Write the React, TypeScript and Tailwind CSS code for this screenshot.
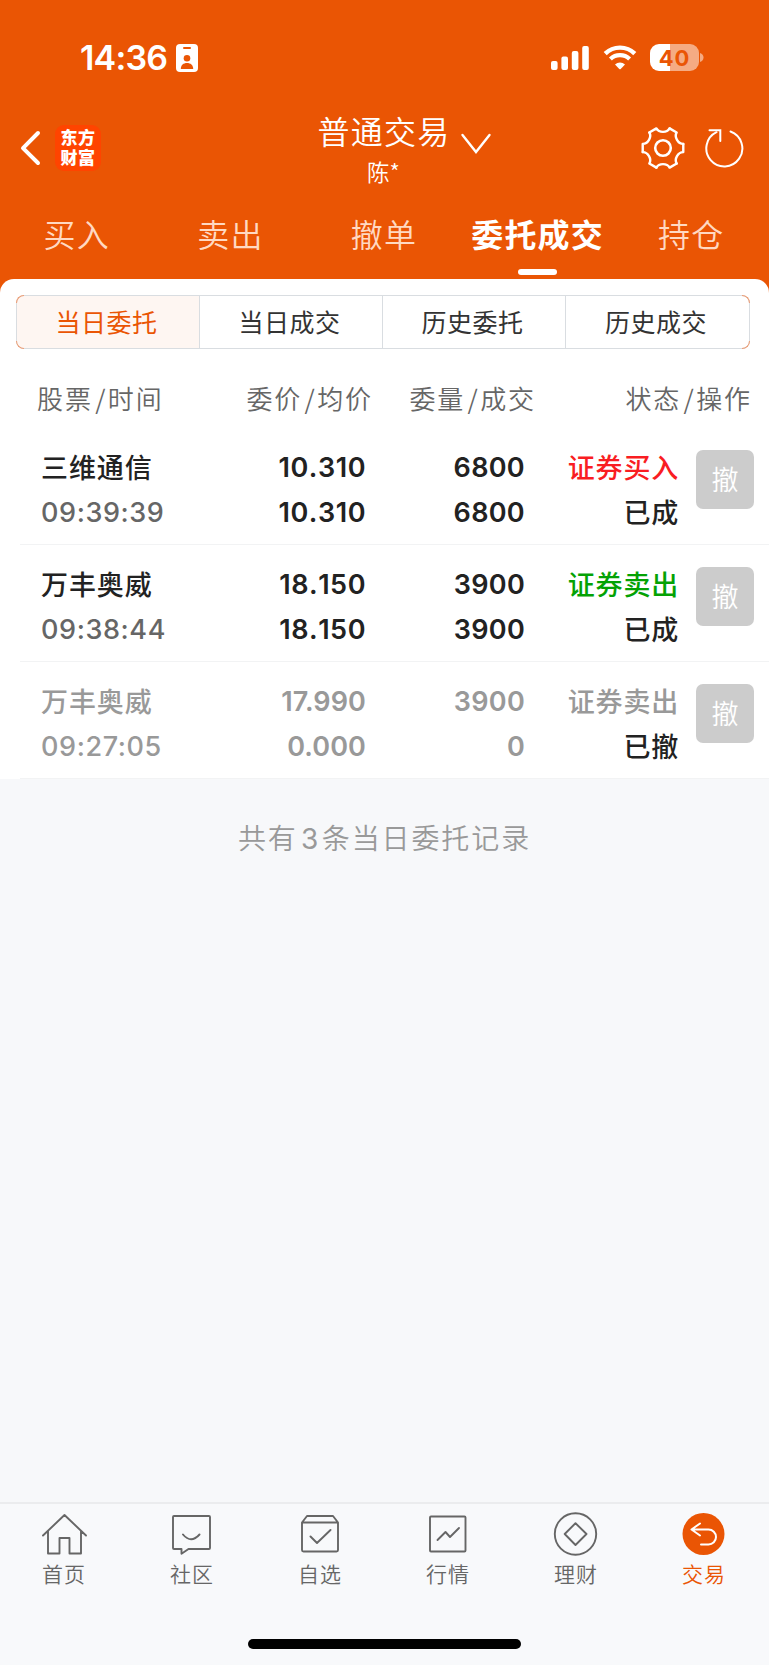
import React from 'react';

type Order = {
  name: string;
  time: string;
  price: string;
  avg: string;
  qty: string;
  filled: string;
  side: string;
  sideColor: string;
  status: string;
  muted?: boolean;
};

const orders: Order[] = [
  { name: '三维通信', time: '09:39:39', price: '10.310', avg: '10.310', qty: '6800', filled: '6800', side: '证券买入', sideColor: 'text-[#f91d22]', status: '已成' },
  { name: '万丰奥威', time: '09:38:44', price: '18.150', avg: '18.150', qty: '3900', filled: '3900', side: '证券卖出', sideColor: 'text-[#04a204]', status: '已成' },
  { name: '万丰奥威', time: '09:27:05', price: '17.990', avg: '0.000', qty: '3900', filled: '0', side: '证券卖出', sideColor: 'text-[#999]', status: '已撤', muted: true },
];

const tabs = ['买入', '卖出', '撤单', '委托成交', '持仓'];
const segments = ['当日委托', '当日成交', '历史委托', '历史成交'];

function StatusBar() {
  return (
    <div className="flex h-[115px] items-center pl-[80px] pr-[65px] text-white">
      <span className="font-[Inter] text-[34px] font-semibold leading-[40px] tracking-[-0.8px]">14:36</span>
      <svg className="ml-[9px] mt-px" width="22" height="28" viewBox="0 0 22 28">
        <rect width="22" height="28" rx="4" fill="#fff" />
        <rect x="7" y="3" width="8" height="2" rx="1" fill="#ea5504" />
        <circle cx="11" cy="14.3" r="3.3" fill="#ea5504" />
        <path d="M4.8 25C4.8 21 7.5 19 11 19S17.2 21 17.2 25Z" fill="#ea5504" />
      </svg>
      <div className="flex-1" />
      <svg width="38" height="24" viewBox="0 0 38 24" fill="#fff">
        <rect x="0" y="15" width="6.6" height="9" rx="2" />
        <rect x="10.4" y="10.5" width="6.6" height="13.5" rx="2" />
        <rect x="20.8" y="5" width="6.6" height="19" rx="2" />
        <rect x="31.2" y="0" width="6.6" height="24" rx="2" />
      </svg>
      <svg className="ml-[14px]" width="34" height="25" viewBox="0 0 34 25">
        <path d="M2.2 8.6A21.2 21.2 0 0 1 31.8 8.6" fill="none" stroke="#fff" strokeWidth="4.4" />
        <path d="M7.4 14A13.8 13.8 0 0 1 26.6 14" fill="none" stroke="#fff" strokeWidth="4.2" />
        <path d="M12 19.4A7.2 7.2 0 0 1 22 19.4L17.7 24Q17 24.7 16.3 24Z" fill="#fff" />
      </svg>
      <div className="ml-[13px] flex h-[27px] w-[49px] items-center justify-center rounded-[9px] bg-[linear-gradient(90deg,#fff_40%,#f5ab83_40%)] font-[Inter] text-[22px] font-bold leading-none tracking-[0.8px] text-[#ea5504]">
        40
      </div>
      <svg className="ml-px" width="4" height="9" viewBox="0 0 4 9">
        <path d="M0 0Q3.5 1.2 3.5 4.5T0 9Z" fill="#f5ab83" />
      </svg>
    </div>
  );
}

function Gear() {
  return (
    <svg width="44" height="44" viewBox="-22 -22 44 44" fill="none" stroke="#fff" strokeWidth="2.4" strokeLinecap="round" strokeLinejoin="round">
      {[0, 60, 120, 180, 240, 300].map((a) => (
        <path key={a} transform={`rotate(${a})`} d="M-13.7 -15.5L-6.6 -19.6C-4 -15 4 -15 6.6 -19.6" />
      ))}
      <circle r="7.8" strokeWidth="2.6" />
    </svg>
  );
}

function TitleBar() {
  return (
    <div className="grid h-[85px] grid-cols-[1fr_auto_1fr] items-start pl-[19px] pr-[24px] text-white">
      <div className="flex items-center pt-[10px]">
        <svg width="24" height="36" viewBox="0 0 24 36" fill="none" stroke="#fff" strokeWidth="4" strokeLinecap="round" strokeLinejoin="round">
          <path d="M19 3L4 18.200L19 33" />
        </svg>
        <div className="ml-[12px] flex h-[46px] w-[46px] items-center justify-center rounded-[9px] bg-[#ff4400] pb-[2px] text-center text-[17px] font-black leading-[20px] tracking-[0.4px]">
          <span>
            东方
            <br />
            财富
          </span>
        </div>
      </div>
      <div className="flex flex-col items-center">
        <div className="flex items-start">
          <div className="w-[46px]" />
          <span className="-mt-[2px] text-[32px] font-[350] leading-[34px] tracking-[1.200px]">普通交易</span>
          <svg className="ml-[10px] mt-[18px]" width="32" height="22" viewBox="0 0 32 22" fill="none" stroke="#fff" strokeWidth="2.400" strokeLinecap="round">
            <path d="M2.500 2L16 19L29.500 2" />
          </svg>
        </div>
        <span className="mt-px pl-[3px] text-[22.500px] font-[350] leading-[30px]">陈*</span>
      </div>
      <div className="flex items-center justify-end gap-[20px] pt-[11px]">
        <Gear />
        <svg width="40" height="40" viewBox="0 0 40 40" fill="none" stroke="#fff" strokeWidth="2" strokeLinecap="round">
          <path d="M11.500 4.200A18 18 0 1 0 25.500 3.500" />
          <path d="M4.500 2.200H15.300V13" />
        </svg>
      </div>
    </div>
  );
}

function Tabs() {
  return (
    <div className="mr-[1px] grid h-[79px] grid-cols-5 text-[32px] leading-[40px] tracking-[1.200px]">
      {tabs.map((t) => {
        const active = t === '委托成交';
        return (
          <div key={t} className="flex flex-col items-center pt-[13px]">
            <span className={active ? 'whitespace-nowrap font-bold text-white' : 'font-[350] text-[#ffd9c2]'}>{t}</span>
            {active && <span className="mt-[16px] h-[6px] w-[39px] rounded-full bg-white" />}
          </div>
        );
      })}
    </div>
  );
}

function Segments() {
  return (
    <div className="relative ml-[16px] mr-[19px]">
      <div className="grid h-[54px] grid-cols-[182px_183px_183px_1fr] overflow-hidden rounded-[8px] border border-[#d9dde1]">
        {segments.map((s, i) => (
          <div
            key={s}
            className={
              i === 0
                ? 'flex items-center justify-center bg-[#fef6f2] pr-[3px] text-[25px] tracking-[0.500px] text-[#ea5504]'
                : 'flex items-center justify-center border-l border-[#d9dde1] pr-[3px] text-[25px] tracking-[0.500px] text-[#333]'
            }
          >
            {s}
          </div>
        ))}
      </div>
      <i className="absolute left-0 top-0 h-[8px] w-[8px] rounded-tl-[8px] border-l border-t border-[#ec9d75]" />
      <i className="absolute bottom-0 left-0 h-[8px] w-[8px] rounded-bl-[8px] border-b border-l border-[#ec9d75]" />
      <i className="absolute right-0 top-0 h-[8px] w-[8px] rounded-tr-[8px] border-r border-t border-[#ec9d75]" />
      <i className="absolute bottom-0 right-0 h-[8px] w-[8px] rounded-br-[8px] border-b border-r border-[#ec9d75]" />
    </div>
  );
}

function TableHead() {
  return (
    <div className="grid h-[79px] grid-cols-[134px_202px_163px_216px] pl-[37px] pt-[29px] text-[26px] leading-[40px] tracking-[1.900px] text-[#666]">
      <span className="whitespace-nowrap font-[350]">股票<Slash />时间</span>
      <span className="whitespace-nowrap text-right font-[350]">委价<Slash />均价</span>
      <span className="whitespace-nowrap text-right font-[350]">委量<Slash />成交</span>
      <span className="whitespace-nowrap text-right font-[350]">状态<Slash />操作</span>
    </div>
  );
}

function Slash() {
  return <span className="inline-block w-[15px] text-center tracking-normal">/</span>;
}

function OrderRow({ o }: { o: Order }) {
  const main = o.muted ? 'text-[#999]' : 'text-[#222]';
  const priceSpacing = o.muted ? 'tracking-[0.100px]' : 'tracking-[0.550px] [font-kerning:none]';
  return (
    <div className="ml-[20px] grid h-[117px] grid-cols-[170px_155px_159px_154px_1fr] border-b border-[#f2f3f4] pl-[21px] pt-[17px] text-[27px] font-medium leading-[44px]">
      <div className="flex flex-col">
        <span className={`h-[46px] tracking-[0.900px] ${main}`}>{o.name}</span>
        <span className={o.muted ? 'font-[Inter] tracking-[0.600px] text-[#999]' : 'font-[Inter] tracking-[0.600px] text-[#666]'}>{o.time}</span>
      </div>
      <div className={`flex flex-col pt-px text-right font-[Inter] font-semibold ${priceSpacing} ${main}`}>
        <span className="h-[45px]">{o.price}</span>
        <span>{o.avg}</span>
      </div>
      <div className={`flex flex-col pt-px text-right font-[Inter] font-semibold tracking-[0.300px] ${main}`}>
        <span className="h-[45px]">{o.qty}</span>
        <span>{o.filled}</span>
      </div>
      <div className="flex flex-col text-right tracking-[0.800px]">
        <span className={`h-[45px] ${o.sideColor}`}>{o.side}</span>
        <span className="text-[#222]">{o.status}</span>
      </div>
      <button className="ml-[17px] mt-[5px] flex h-[59px] w-[58px] items-center justify-center rounded-[7px] bg-[#ccc] pb-[2px] font-[350] text-white">撤</button>
    </div>
  );
}

const G = '#666';

function NavItem({ label, active, children }: { label: string; active?: boolean; children: React.ReactNode }) {
  return (
    <div className="flex flex-col items-center pt-[8px]">
      <svg width="46" height="46" viewBox="0 0 46 46" fill="none" stroke={G} strokeWidth="1.900" strokeLinecap="round" strokeLinejoin="round">
        {children}
      </svg>
      <span className={active ? 'text-[21px] font-[350] leading-[30px] tracking-[1px] text-[#ea5504]' : 'text-[21px] font-[350] leading-[30px] tracking-[1px] text-[#666]'}>{label}</span>
    </div>
  );
}

function BottomNav() {
  return (
    <nav className="flex h-[163px] flex-col border-t-2 border-[#ebecee] bg-[#f8f9fb]">
      <div className="mr-px grid grid-cols-6">
        <NavItem label="首页">
          <path d="M2 23.500L23.500 3L45 23.500M7 19V41.500H18.500V26H28.500V41.500H40V19" />
        </NavItem>
        <NavItem label="社区">
          <path d="M5 4H40Q41 4 41 5V36Q41 37 40 37H19.500L12.500 41.800V37H5Q4 37 4 36V5Q4 4 5 4ZM14 22.500Q22 32 30.500 22.500" />
        </NavItem>
        <NavItem label="自选">
          <path d="M5 10.500L10 4H36L41 10.500V38Q41 39.500 39.500 39.500H6.500Q5 39.500 5 38ZM5 10.500H41M13.500 24.500L20 31L33.500 18" />
        </NavItem>
        <NavItem label="行情">
          <rect x="5" y="4.500" width="35.500" height="35" rx="1" />
          <path d="M12.500 28L20.500 20L25 25L34 16" />
        </NavItem>
        <NavItem label="理财">
          <circle cx="22.500" cy="22" r="20.700" />
          <path d="M22.500 11.200L33.500 22L22.500 33L11.700 22Z" />
        </NavItem>
        <NavItem label="交易" active>
          <circle cx="22.500" cy="22" r="21" fill="#ea5504" stroke="none" />
          <path d="M19 11.500L10.500 17.500L19 23.500M10.500 17.500H27.500A7.500 7.500 0 0 1 27.500 32.500H20" stroke="#fff" strokeWidth="2" />
        </NavItem>
      </div>
      <div className="ml-[248px] mt-[51px] h-[10px] w-[273px] rounded-full bg-black" />
    </nav>
  );
}

export default function App() {
  return (
    <div className="flex h-[1665px] w-[769px] flex-col overflow-hidden bg-[#f7f8fa] font-['Noto_Sans_CJK_SC',sans-serif]">
      <header className="bg-[#ea5504]">
        <StatusBar />
        <TitleBar />
        <Tabs />
        <div className="h-[16px] rounded-t-[14px] bg-white" />
      </header>
      <main className="bg-white">
        <Segments />
        <TableHead />
        {orders.map((o) => (
          <OrderRow key={o.time} o={o} />
        ))}
      </main>
      <p className="mt-[37px] text-center text-[28px] font-[350] leading-[42px] tracking-[1.900px] text-[#999]">
        共有<span className="inline-block w-[24px] text-center font-[Inter] font-normal tracking-normal">3</span>条当日委托记录
      </p>
      <div className="flex-1" />
      <BottomNav />
    </div>
  );
}
